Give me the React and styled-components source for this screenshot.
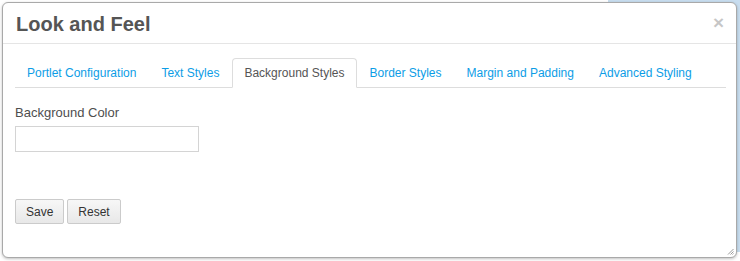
import React from "react";
import styled, { createGlobalStyle } from "styled-components";

const Global = createGlobalStyle`
  html, body { margin: 0; padding: 0; background: #ffffff; }
  body { font-family: "Liberation Sans", Arial, sans-serif; }
  * { box-sizing: border-box; }
`;

const Page = styled.div`
  width: 740px;
  height: 261px;
  padding: 2px 3px 3px 2px;
  background: linear-gradient(#c8ddef, #c8ddef) no-repeat 608px 0 / 132px 252px, #ffffff;
`;

const Dialog = styled.div`
  position: relative;
  width: 735px;
  height: 256px;
  background: #fff;
  border: 1px solid #a9a9a9;
  border-radius: 6px;
  box-shadow: 0 1px 3px rgba(0, 0, 0, 0.25);
  display: flex;
  flex-direction: column;
`;

const Header = styled.div`
  height: 41px;
  display: flex;
  align-items: center;
  justify-content: space-between;
  padding: 0 12px 0 13px;
  border-bottom: 1px solid #e5e5e5;
`;

const Title = styled.h3`
  margin: 0;
  font-size: 20px;
  font-weight: bold;
  color: #555;
  line-height: 24px;
  padding-top: 1px;
`;

const Close = styled.button`
  border: 0;
  background: none;
  padding: 0;
  font-family: "Liberation Sans", Arial, sans-serif;
  font-size: 19px;
  font-weight: bold;
  line-height: 20px;
  color: #000;
  opacity: 0.22;
  cursor: pointer;
`;

const Body = styled.div`
  flex: 1;
  padding: 14px 10px 0 12px;
  display: flex;
  flex-direction: column;
`;

const Tabs = styled.ul`
  list-style: none;
  margin: 0;
  padding: 0;
  display: flex;
  border-bottom: 1px solid #dddddd;
`;

const Tab = styled.li`
  margin: 0 1px -1px 0;
  padding: 5px 11px;
  line-height: 18px;
  font-size: 12px;
  border: 1px solid ${(p) => (p.$active ? "#dddddd" : "transparent")};
  border-bottom-color: ${(p) => (p.$active ? "#ffffff" : "transparent")};
  border-radius: 4px 4px 0 0;
  background: ${(p) => (p.$active ? "#ffffff" : "transparent")};
  color: ${(p) => (p.$active ? "#555555" : "#0c9de6")};
  cursor: pointer;
  white-space: nowrap;
`;

const Label = styled.label`
  display: block;
  margin-top: 15px;
  font-size: 13px;
  line-height: 20px;
  color: #4e4e4e;
`;

const Input = styled.input`
  display: block;
  margin-top: 3px;
  width: 184px;
  height: 26px;
  border: 1px solid #d4d4d4;
  border-radius: 0;
  padding: 2px 6px;
  font-family: "Liberation Sans", Arial, sans-serif;
  font-size: 13px;
  outline: none;
`;

const Buttons = styled.div`
  display: flex;
  gap: 3px;
  margin-top: 47px;
`;

const Button = styled.button`
  height: 25px;
  padding: 0 10px;
  font-family: "Liberation Sans", Arial, sans-serif;
  font-size: 12px;
  color: #333;
  background: linear-gradient(#f7f7f7, #e8e8e8);
  border: 1px solid #cbcbcb;
  border-radius: 2px;
  cursor: pointer;
`;

const Grip = styled.svg`
  position: absolute;
  right: 2px;
  bottom: 2px;
`;

const tabs = [
  "Portlet Configuration",
  "Text Styles",
  "Background Styles",
  "Border Styles",
  "Margin and Padding",
  "Advanced Styling",
];

export default function App() {
  return (
    <>
      <Global />
      <Page>
        <Dialog>
          <Header>
            <Title>Look and Feel</Title>
            <Close aria-label="Close">×</Close>
          </Header>
          <Body>
            <Tabs>
              {tabs.map((t) => (
                <Tab key={t} $active={t === "Background Styles"}>
                  {t}
                </Tab>
              ))}
            </Tabs>
            <Label>Background Color</Label>
            <Input type="text" />
            <Buttons>
              <Button>Save</Button>
              <Button>Reset</Button>
            </Buttons>
          </Body>
          <Grip width="7" height="7" viewBox="0 0 7 7">
            <path d="M6.5 1 L1 6.5 M6.5 3.5 L3.5 6.5 M6.5 5.5 L5.5 6.5" stroke="#9a9a9a" strokeWidth="1" fill="none" />
          </Grip>
        </Dialog>
      </Page>
    </>
  );
}
